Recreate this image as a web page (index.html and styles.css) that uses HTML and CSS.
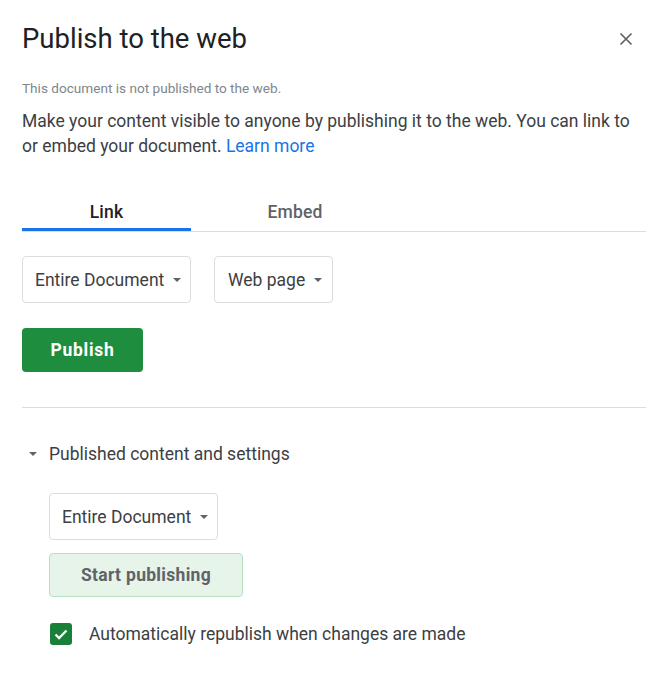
FILE: index.html
```html
<!DOCTYPE html>
<html>
<head>
<meta charset="utf-8">
<link rel="stylesheet" href="styles.css">
</head>
<body>
<div class="dialog">
  <div class="header">
    <h1 class="title">Publish to the web</h1>
    <svg class="close" width="14" height="14" viewBox="0 0 14 14"><path d="M1.5 1.5L12.5 12.5M12.5 1.5L1.5 12.5" stroke="#5f6368" stroke-width="1.7" fill="none"/></svg>
  </div>
  <p class="status">This document is not published to the web.</p>
  <p class="desc">Make your content visible to anyone by publishing it to the web. You can link to or embed your document. <a class="link" href="#">Learn more</a></p>
  <div class="tabs">
    <div class="tab tab-active">Link</div>
    <div class="tab tab-embed">Embed</div>
  </div>
  <div class="row">
    <div class="select sel-doc"><span>Entire Document</span><span class="caret"></span></div>
    <div class="select sel-web"><span>Web page</span><span class="caret"></span></div>
  </div>
  <button class="btn-publish">Publish</button>
  <div class="divider"></div>
  <div class="section-head"><span class="caret caret-head"></span><span>Published content and settings</span></div>
  <div class="section-body">
    <div class="select sel-doc2"><span>Entire Document</span><span class="caret"></span></div>
    <button class="btn-start">Start publishing</button>
    <div class="check-row">
      <span class="checkbox"><svg width="22" height="22" viewBox="0 0 22 22"><path d="M5.5 11.5l3.6 3.6 7.4-7.6" stroke="#fff" stroke-width="2.2" fill="none"/></svg></span>
      <span>Automatically republish when changes are made</span>
    </div>
  </div>
</div>
</body>
</html>
```
FILE: styles.css
```css
html, body {
  margin: 0;
  padding: 0;
  background: #fff;
}
body {
  font-family: Roboto, "Liberation Sans", Arial, sans-serif;
  color: #3c4043;
}
.dialog {
  width: 624px;
  padding: 0 24px 0 22px;
}
.header {
  display: flex;
  align-items: center;
  justify-content: space-between;
  height: 40px;
  padding-top: 19px;
}
.title {
  margin: 0;
  font-size: 27.5px;
  font-weight: 400;
  color: #202124;
  line-height: 40px;
}
.close {
  margin-right: 13px;
}
.status {
  margin: 21px 0 0;
  font-size: 13.6px;
  line-height: 16px;
  color: #80868b;
}
.desc {
  margin: 13px 0 0;
  font-size: 17.5px;
  line-height: 25px;
  color: #3c4043;
}
.link {
  color: #1a73e8;
  text-decoration: none;
}
.tabs {
  display: flex;
  margin-top: 36px;
  border-bottom: 1px solid #dadce0;
}
.tab {
  height: 36px;
  line-height: 34px;
  font-size: 17.5px;
  font-weight: 500;
  letter-spacing: 0.2px;
  text-align: center;
  color: #5f6368;
  box-sizing: border-box;
}
.tab-active {
  width: 169px;
  color: #202124;
  border-bottom: 3px solid #1a73e8;
  margin-bottom: -1px;
}
.tab-embed {
  width: 208px;
}
.row {
  display: flex;
  gap: 23px;
  margin-top: 24px;
}
.select {
  display: inline-flex;
  align-items: center;
  height: 47px;
  box-sizing: border-box;
  border: 1px solid #dadce0;
  border-radius: 4px;
  font-size: 17.5px;
  color: #3c4043;
  padding: 0 10px 0 12px;
  white-space: nowrap;
}
.select span { flex-shrink: 0; }
.sel-doc, .sel-doc2 { width: 169px; }
.sel-web { width: 119px; padding-left: 13px; }
.caret {
  width: 0;
  height: 0;
  border-left: 4px solid transparent;
  border-right: 4px solid transparent;
  border-top: 4px solid #5f6368;
  margin-left: 9px;
}
.btn-publish {
  display: block;
  margin-top: 25px;
  width: 121px;
  height: 44px;
  border: none;
  border-radius: 4px;
  background: #1e8e3e;
  color: #fff;
  font-family: Roboto, "Liberation Sans", Arial, sans-serif;
  font-size: 17.5px;
  font-weight: 700;
  letter-spacing: 0.7px;
}
.divider {
  margin-top: 35px;
  height: 1px;
  background: #dadce0;
}
.section-head {
  display: flex;
  align-items: center;
  margin-top: 34px;
  padding-left: 7px;
  font-size: 17.5px;
  line-height: 24px;
  color: #3c4043;
}
.caret-head {
  margin-left: 0;
  margin-right: 12px;
}
.section-body {
  padding-left: 27px;
  display: flex;
  flex-direction: column;
  align-items: flex-start;
}
.sel-doc2 {
  margin-top: 27px;
}
.btn-start {
  margin-top: 13px;
  width: 194px;
  height: 44px;
  box-sizing: border-box;
  border: 1px solid #b7dfc1;
  border-radius: 4px;
  background: #e6f4ea;
  color: #5f6368;
  font-family: Roboto, "Liberation Sans", Arial, sans-serif;
  font-size: 17.5px;
  font-weight: 700;
  letter-spacing: 0.3px;
}
.check-row {
  display: flex;
  align-items: center;
  gap: 17px;
  margin-top: 26px;
  padding-left: 1px;
  font-size: 17.5px;
  color: #3c4043;
}
.checkbox {
  width: 22px;
  height: 22px;
  border-radius: 3px;
  background: #188038;
  display: block;
}
.checkbox svg { display: block; }
```
